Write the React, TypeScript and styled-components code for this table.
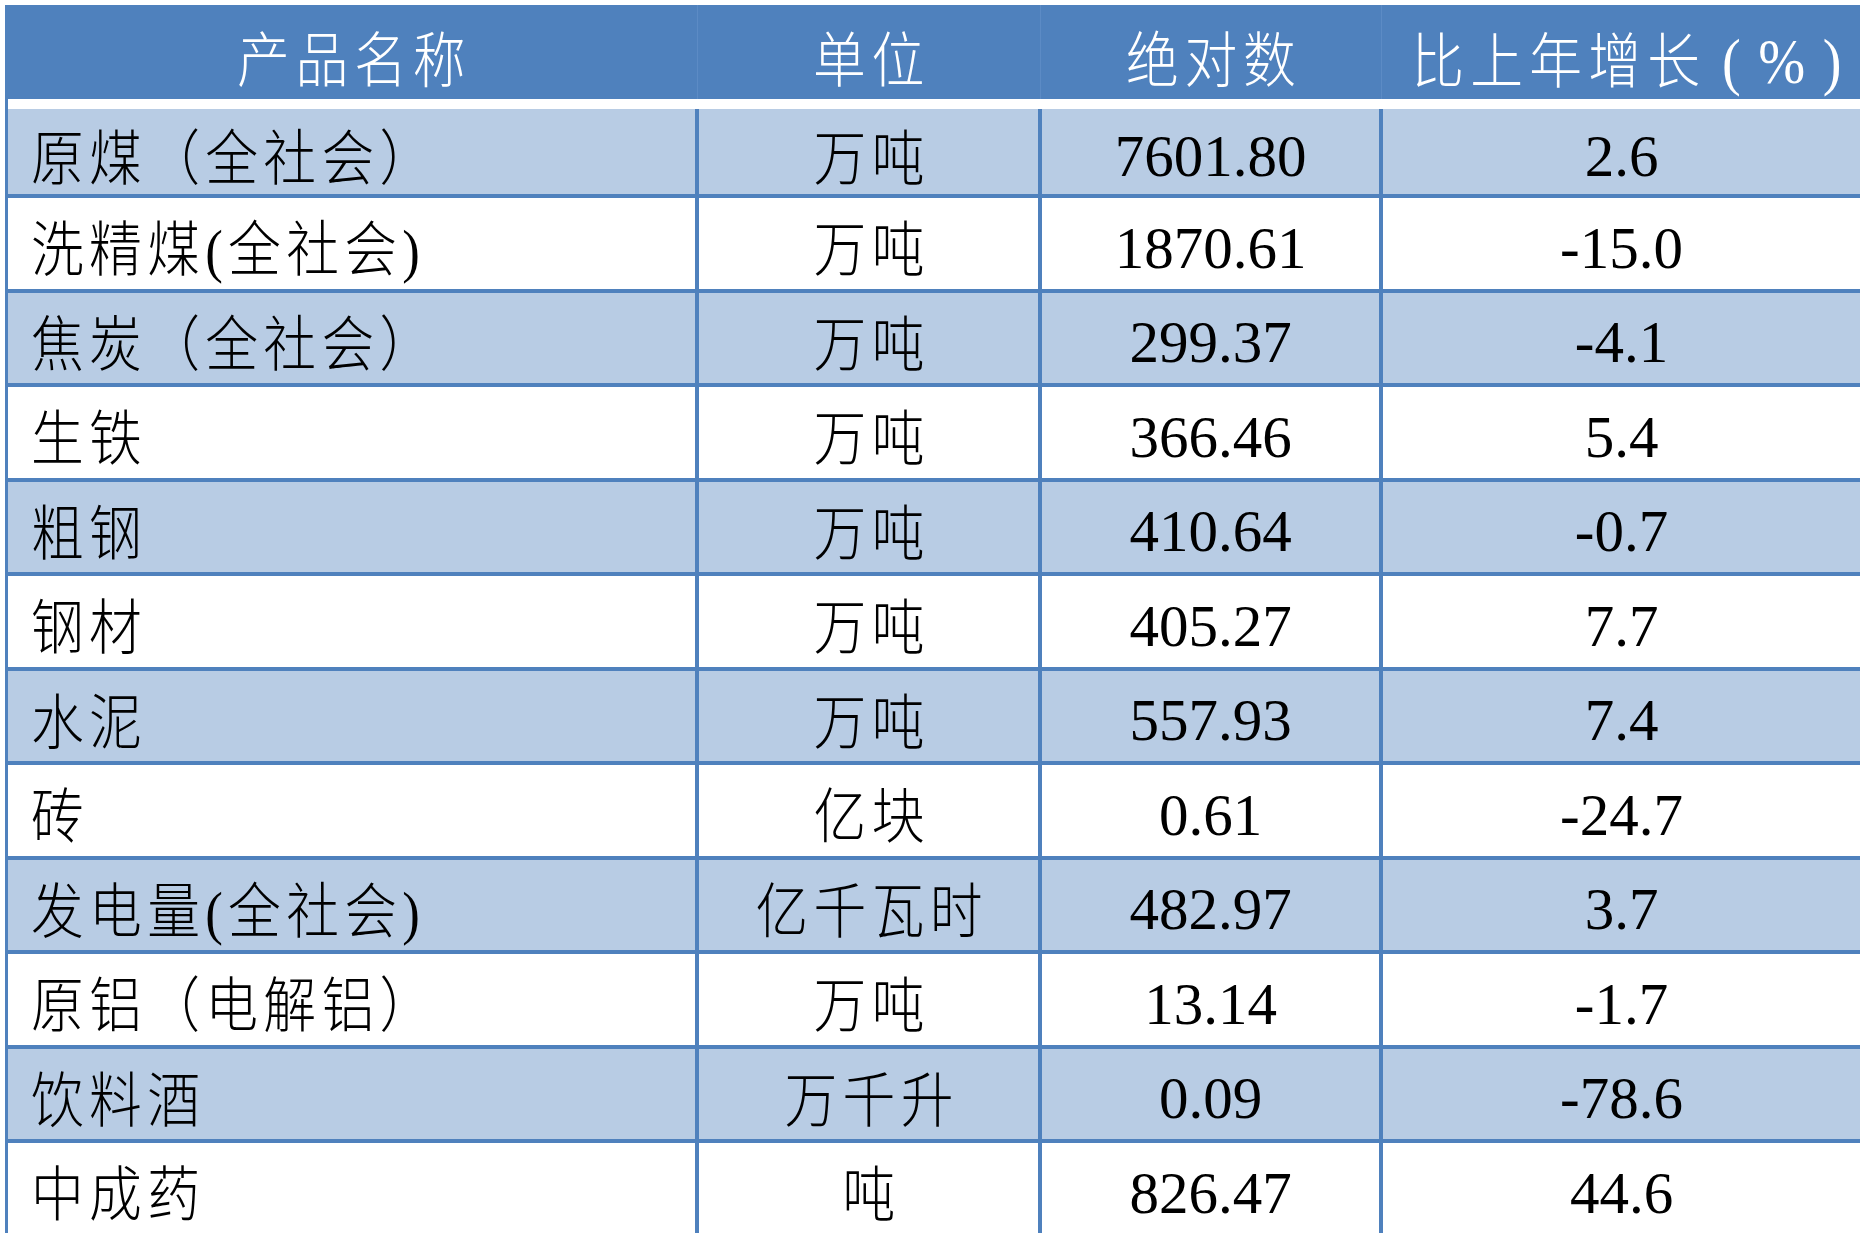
import React from 'react';
import styled, { createGlobalStyle } from 'styled-components';

const GlobalStyle = createGlobalStyle`
  html, body {
    margin: 0;
    padding: 0;
    background: #ffffff;
    width: 1860px;
    height: 1233px;
    overflow: hidden;
  }
  body {
    font-family: "Liberation Serif", "Noto Sans CJK SC", serif;
  }
`;

const BLUE = '#4F81BD';
const SHADE = '#B8CCE4';

const Page = styled.div`
  padding: 5px 0 0 5px;
`;

const Table = styled.div`
  width: 1855px;
`;

const HeaderRow = styled.div`
  display: grid;
  grid-template-columns: 693px 343px 341px 1fr;
  height: 94px;
  background: ${BLUE};
`;

const HeaderCell = styled.div`
  display: flex;
  align-items: center;
  justify-content: center;
  padding-top: 20px;
  box-sizing: border-box;
  border-right: 1px solid #5C8BC5;
  color: #ffffff;
  &:last-child {
    border-right: none;
  }
`;

const Body = styled.div`
  border-left: 3px solid ${BLUE};
  padding-top: 10px;
`;

const Row = styled.div<{ $shade: boolean; $first: boolean }>`
  display: grid;
  grid-template-columns: 691px 343px 341px 1fr;
  box-sizing: border-box;
  height: ${(p) => (p.$first ? 89 : 94.5)}px;
  border-bottom: 4px solid ${BLUE};
  background: ${(p) => (p.$shade ? SHADE : '#ffffff')};
`;

const Cell = styled.div<{ $left?: boolean; $num?: boolean }>`
  display: flex;
  align-items: center;
  justify-content: ${(p) => (p.$left ? 'flex-start' : 'center')};
  padding-left: ${(p) => (p.$left ? '23px' : '0')};
  padding-top: ${(p) => (p.$num ? '10px' : '16px')};
  box-sizing: border-box;
  border-right: 4px solid ${BLUE};
  color: #000000;
  overflow: hidden;
  &:last-child {
    border-right: none;
  }
`;

const Han = styled.span<{ $ls: number; $left?: boolean; $noPad?: boolean }>`
  display: inline-block;
  font-family: "Liberation Serif", "Noto Sans CJK SC", serif;
  font-size: 60px;
  font-weight: 300;
  line-height: 1;
  white-space: nowrap;
  letter-spacing: ${(p) => p.$ls}px;
  padding-left: ${(p) => (p.$left || p.$noPad ? 0 : p.$ls)}px;
  transform: scaleX(0.88);
  transform-origin: ${(p) => (p.$left ? 'left center' : 'center center')};
`;

const Paren = styled.span`
  font-family: "Liberation Serif", "Times New Roman", serif;
  font-size: 64px;
  letter-spacing: 20px;
  margin-left: 18px;
  margin-right: -20px;
`;

const Num = styled.span`
  display: inline-block;
  font-family: "Liberation Serif", "Times New Roman", serif;
  font-size: 59px;
  line-height: 1;
  white-space: nowrap;
`;

type RowData = [string, string, string, string];

const rows: RowData[] = [
  ['原煤（全社会）', '万吨', '7601.80', '2.6'],
  ['洗精煤(全社会)', '万吨', '1870.61', '-15.0'],
  ['焦炭（全社会）', '万吨', '299.37', '-4.1'],
  ['生铁', '万吨', '366.46', '5.4'],
  ['粗钢', '万吨', '410.64', '-0.7'],
  ['钢材', '万吨', '405.27', '7.7'],
  ['水泥', '万吨', '557.93', '7.4'],
  ['砖', '亿块', '0.61', '-24.7'],
  ['发电量(全社会)', '亿千瓦时', '482.97', '3.7'],
  ['原铝（电解铝）', '万吨', '13.14', '-1.7'],
  ['饮料酒', '万千升', '0.09', '-78.6'],
  ['中成药', '吨', '826.47', '44.6'],
];

export default function App() {
  return (
    <>
      <GlobalStyle />
      <Page>
        <Table>
          <HeaderRow>
            <HeaderCell>
              <Han $ls={6.5}>产品名称</Han>
            </HeaderCell>
            <HeaderCell>
              <Han $ls={6.5}>单位</Han>
            </HeaderCell>
            <HeaderCell>
              <Han $ls={6.5}>绝对数</Han>
            </HeaderCell>
            <HeaderCell>
              <Han $ls={7} $noPad>
                比上年增长<Paren>(%)</Paren>
              </Han>
            </HeaderCell>
          </HeaderRow>
          <Body>
            {rows.map((r, i) => (
              <Row key={r[0]} $shade={i % 2 === 0} $first={i === 0}>
                <Cell $left>
                  <Han $ls={6} $left>
                    {r[0]}
                  </Han>
                </Cell>
                <Cell>
                  <Han $ls={6}>{r[1]}</Han>
                </Cell>
                <Cell $num>
                  <Num>{r[2]}</Num>
                </Cell>
                <Cell $num>
                  <Num>{r[3]}</Num>
                </Cell>
              </Row>
            ))}
          </Body>
        </Table>
      </Page>
    </>
  );
}
